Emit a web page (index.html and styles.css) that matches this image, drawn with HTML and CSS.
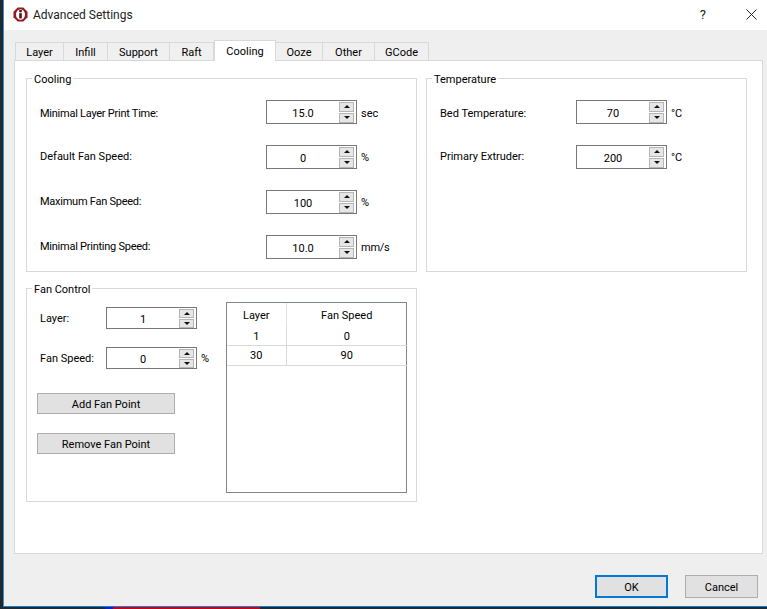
FILE: index.html
```html
<!DOCTYPE html>
<html lang="en">
<head>
<meta charset="utf-8">
<title>Advanced Settings</title>
<link rel="stylesheet" href="styles.css">
</head>
<body>
<div class="screen">
  <div class="window">
    <header class="titlebar">
      <svg class="app-icon" width="15" height="15" viewBox="0 0 16 16"><polygon points="5,0.5 11,0.5 15.5,5 15.5,11 11,15.5 5,15.5 0.5,11 0.5,5" fill="#8e1c22"/><ellipse cx="8" cy="8" rx="4.8" ry="5.6" fill="#fff"/><rect x="6.6" y="6.6" width="2.8" height="5.6" fill="#5c0f13"/><rect x="6.6" y="3.2" width="2.8" height="2.4" fill="#5c0f13"/></svg>
      <span class="title">Advanced Settings</span>
      <span class="help">?</span>
      <svg class="close" width="11" height="11" viewBox="0 0 11 11"><path d="M0.5 0.5L10.5 10.5M10.5 0.5L0.5 10.5" stroke="#222" stroke-width="1" fill="none"/></svg>
    </header>
    <main class="dialog">
      <nav class="tabs">
        <span class="tab w-layer">Layer</span>
        <span class="tab w-infill">Infill</span>
        <span class="tab w-support">Support</span>
        <span class="tab w-raft">Raft</span>
        <span class="tab active w-cooling">Cooling</span>
        <span class="tab w-ooze">Ooze</span>
        <span class="tab w-other">Other</span>
        <span class="tab w-gcode">GCode</span>
      </nav>
      <div class="pane">
        <section class="group cooling">
          <span class="legend">Cooling</span>
          <div class="form">
            <div class="row"><label class="lbl tight">Minimal Layer Print Time:</label><div class="spin"><span class="val">15.0</span><span class="btns"><i class="up"></i><i class="down"></i></span></div><span class="unit">sec</span></div>
            <div class="row raised"><label class="lbl">Default Fan Speed:</label><div class="spin"><span class="val">0</span><span class="btns"><i class="up"></i><i class="down"></i></span></div><span class="unit">%</span></div>
            <div class="row raised"><label class="lbl tight">Maximum Fan Speed:</label><div class="spin"><span class="val">100</span><span class="btns"><i class="up"></i><i class="down"></i></span></div><span class="unit">%</span></div>
            <div class="row raised"><label class="lbl tight">Minimal Printing Speed:</label><div class="spin"><span class="val">10.0</span><span class="btns"><i class="up"></i><i class="down"></i></span></div><span class="unit tight">mm/s</span></div>
          </div>
        </section>
        <section class="group temperature">
          <span class="legend">Temperature</span>
          <div class="form">
            <div class="row"><label class="lbl">Bed Temperature:</label><div class="spin"><span class="val">70</span><span class="btns"><i class="up"></i><i class="down"></i></span></div><span class="unit">°C</span></div>
            <div class="row raised"><label class="lbl">Primary Extruder:</label><div class="spin"><span class="val">200</span><span class="btns"><i class="up"></i><i class="down"></i></span></div><span class="unit">°C</span></div>
          </div>
        </section>
        <section class="group fan">
          <span class="legend">Fan Control</span>
          <div class="fan-left">
            <div class="fan-row"><label class="fan-lbl">Layer:</label><div class="spin small"><span class="val">1</span><span class="btns"><i class="up"></i><i class="down"></i></span></div></div>
            <div class="fan-row"><label class="fan-lbl">Fan Speed:</label><div class="spin small"><span class="val">0</span><span class="btns"><i class="up"></i><i class="down"></i></span></div><span class="unit">%</span></div>
            <button class="push first">Add Fan Point</button>
            <button class="push">Remove Fan Point</button>
          </div>
          <div class="table-box">
            <table>
              <thead><tr><th class="col-a">Layer</th><th>Fan Speed</th></tr></thead>
              <tbody>
                <tr><td>1</td><td>0</td></tr>
                <tr><td>30</td><td>90</td></tr>
              </tbody>
            </table>
          </div>
        </section>
      </div>
      <footer class="actions">
        <button class="push ok">OK</button>
        <button class="push cancel">Cancel</button>
      </footer>
    </main>
  </div>
  <div class="desktop"><span class="seg-blue"></span><span class="seg-red"></span></div>
</div>
</body>
</html>
```
FILE: styles.css
```css
* { box-sizing: border-box; }
html, body { margin: 0; padding: 0; }
body {
  width: 767px;
  height: 609px;
  overflow: hidden;
  background: #23282d;
  font-family: Roboto, "Open Sans", sans-serif;
  font-size: 11px;
  color: #000;
}
.screen { display: flex; flex-direction: column; height: 609px; padding-left: 3px; }
.window {
  height: 607px;
  display: flex;
  flex-direction: column;
  background: #efefef;
  border-left: 1px solid #3a8fd0;
  border-bottom: 1px solid #0a84d8;
}
.titlebar {
  height: 30px;
  flex: none;
  background: #fff;
  display: flex;
  align-items: center;
  padding: 0 0 1px 9px;
}
.app-icon { flex: none; }
.title { margin-left: 5px; font-size: 12px; color: #222; }
.help { margin-left: auto; font-size: 13px; color: #222; margin-right: 40px; }
.close { margin-right: 10px; }
.dialog { flex: 1; display: flex; flex-direction: column; padding: 10px 0 0 10px; }
.tabs { display: flex; height: 20px; margin-left: 1px; align-items: flex-end; position: relative; z-index: 1; }
.tab {
  height: 18px;
  background: #f0f0f0;
  border: 1px solid #d9d9d9;
  border-left-width: 0;
  border-bottom: 0;
  text-align: center;
  line-height: 20px;
}
.w-layer { width: 49px; border-left-width: 1px; }
.w-infill { width: 44px; }
.w-support { width: 62px; }
.w-raft { width: 44px; }
.w-cooling { width: 62px; }
.w-ooze { width: 47px; }
.w-other { width: 52px; }
.w-gcode { width: 54px; }
.tab.active { height: 21px; background: #fff; margin-bottom: -1px; line-height: 21px; border-left-width: 1px; }
.pane {
  width: 749px;
  height: 494px;
  background: #fff;
  border: 1px solid #d9d9d9;
  display: grid;
  grid-template-columns: 391px 321px;
  grid-template-rows: 194px 214px;
  column-gap: 9px;
  row-gap: 16px;
  padding: 17px 0 0 11px;
}
.group { position: relative; border: 1px solid #d9d9d9; }
.legend {
  position: absolute;
  left: 5px;
  top: -7px;
  padding: 0 2px;
  background: #fff;
  line-height: 15px;
}
.form { display: flex; flex-direction: column; gap: 21px; padding: 21px 0 0 13px; }
.row { display: flex; align-items: center; height: 24px; }
.lbl { width: 226px; padding-top: 2px; }
.tight { letter-spacing: -0.25px; }
.unit, .fan-lbl, .val { padding-top: 2px; }
.raised .lbl { margin-bottom: 3px; }
.raised .unit { margin-bottom: 2px; }
.temperature .lbl { width: 136px; }
.spin {
  width: 91px;
  height: 24px;
  border: 1px solid #777;
  background: #fff;
  display: flex;
  align-items: center;
  padding-right: 2px;
}
.spin.small { height: 22px; }
.val { flex: 1; text-align: center; }
.btns { width: 15px; display: flex; flex-direction: column; gap: 1px; }
.btns i {
  height: 10px;
  background: #e6e6e6;
  border: 1px solid #b5b5b5;
  display: flex;
  align-items: center;
  justify-content: center;
}
.small .btns i { height: 9px; }
.up::after { content: ""; border: 3.5px solid transparent; border-top: 0; border-bottom: 3.5px solid #111; }
.down::after { content: ""; border: 3.5px solid transparent; border-bottom: 0; border-top: 3.5px solid #111; }
.unit { margin-left: 4px; }
.fan { grid-column: 1; display: flex; }
.fan-left { width: 199px; padding: 18px 0 0 10px; display: flex; flex-direction: column; }
.fan-row { display: flex; align-items: center; height: 22px; margin-bottom: 18px; }
.fan-lbl { width: 69px; padding: 2px 0 2px 3px; }
.fan-row .unit { margin-bottom: 2px; }
.push {
  width: 138px;
  height: 21px;
  padding: 2px 0 0;
  font: inherit;
  color: #000;
  background: #e1e1e1;
  border: 1px solid #adadad;
  margin-bottom: 19px;
}
.push.first { margin-top: 6px; }
.table-box {
  width: 181px;
  height: 191px;
  margin-top: 13px;
  border: 1px solid #7f868e;
  background: #fff;
}
table { border-collapse: collapse; width: 180px; table-layout: fixed; }
th { font-weight: 400; height: 23px; padding: 2px 0 0; border-right: 1px solid #e2e2e2; }
th:last-child, td:last-child { border-right: 0; }
td { height: 19.5px; padding: 1px 0 0; text-align: center; border-right: 1px solid #d9d9d9; border-bottom: 1px solid #d9d9d9; }
.col-a { width: 59px; }
.actions { display: flex; justify-content: flex-end; gap: 17px; padding: 21px 9px 0 0; }
.actions .push { width: 73px; height: 23px; margin: 0; }
.ok { border: 2px solid #0078d7 !important; }
.desktop { flex: 1; display: flex; align-items: stretch; padding-left: 102px; }
.seg-blue { width: 8px; background: #1020c0; }
.seg-red { width: 147px; background: #d00010; }
```
